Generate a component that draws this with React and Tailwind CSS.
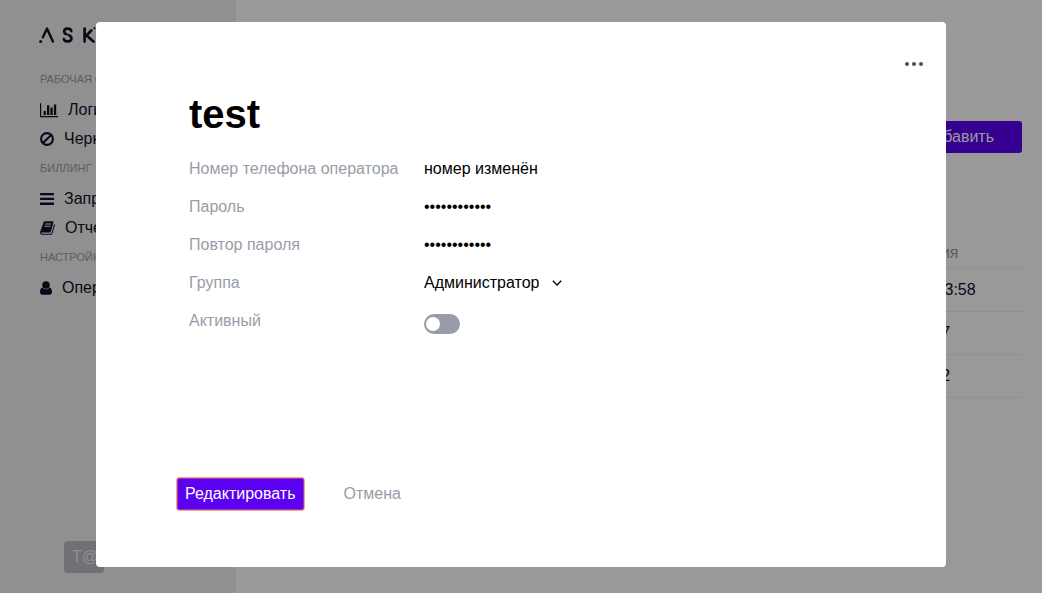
const Icon = ({ w, vb, children }) => (
  <svg width={w} height="16" viewBox={vb} fill="currentColor" aria-hidden="true" className="shrink-0">
    {children}
  </svg>
);

const icons = {
  chart: (
    <Icon w="18" vb="0 0 18 16">
      <path d="M0 1.300h1.200V14H18v1.200H0zM3.600 9h2.300v4H3.600zM7 3.300h2.300V13H7zM10.400 5.400h2.300V13h-2.300zM13.900 2.500h2.300V13h-2.300z" />
    </Icon>
  ),
  ban: (
    <Icon w="14" vb="0 0 14 16">
      <circle cx="7" cy="8" r="5.900" fill="none" stroke="currentColor" strokeWidth="2.100" />
      <path d="M2.900 12.100L11.100 3.900" stroke="currentColor" strokeWidth="2.100" />
    </Icon>
  ),
  list: (
    <Icon w="14" vb="0 0 14 16">
      <rect y="2" width="14" height="2.300" rx=".5" />
      <rect y="6.800" width="14" height="2.300" rx=".5" />
      <rect y="11.600" width="14" height="2.300" rx=".5" />
    </Icon>
  ),
  book: (
    <Icon w="15" vb="0 0 1664 1792">
      <path d="M1639 478q40 57 18 129l-275 906q-19 64-76.500 107.500t-122.500 43.500h-923q-77 0-148.500-53.500t-99.500-131.500q-24-67-2-127 0-4 3-27t4-37q1-8-3-21.500t-3-19.500q2-11 8-21t16.500-23.500 16.500-23.500q23-38 45-91.500t30-91.500q3-10 .5-30t-.5-28q3-11 17-28t17-23q21-36 42-92t25-90q1-9-2.500-32t.5-28q4-13 22-30.500t22-22.500q19-26 42.500-84.500t27.500-96.500q1-8-3-25.500t-2-26.500q2-8 9-18t18-23 17-21q8-12 16.500-30.500t15-35 16-36 19.500-32 26.500-23.500 36-11.500 47.500 5.500l-1 3q38-9 51-9h761q74 0 114 56t18 130l-274 906q-36 119-71.500 153.500t-128.500 34.500h-869q-27 0-38 15-11 16-1 43 24 70 144 70h923q29 0 56-15.500t35-41.500l300-987q7-22 5-57 38 15 59 43zm-1064 2q-4 13 2 22.500t20 9.500h608q13 0 25.500-9.500t16.500-22.500l21-64q4-13-2-22.500t-20-9.500h-608q-13 0-25.500 9.500t-16.500 22.500zm-83 256q-4 13 2 22.500t20 9.500h608q13 0 25.500-9.500t16.500-22.500l21-64q4-13-2-22.500t-20-9.500h-608q-13 0-25.500 9.500t-16.500 22.500z" />
    </Icon>
  ),
  user: (
    <Icon w="12" vb="0 0 12 16">
      <circle cx="6" cy="5" r="3.800" />
      <path d="M2.500 7.500C.8 7.900 0 9.600 0 12c0 1.600.9 2.700 2.300 2.700h7.400c1.400 0 2.300-1.100 2.300-2.700 0-2.400-.8-4.100-2.500-4.500C8.400 8.900 7.300 9.300 6 9.300s-2.400-.4-3.500-1.800z" />
    </Icon>
  ),
};

const menu = [
  { title: "Рабочая область", items: [["chart", "Логи"], ["ban", "Черный список"]] },
  { title: "Биллинг", items: [["list", "Запросы"], ["book", "Отчеты"]] },
  { title: "Настройки", items: [["user", "Операторы"]] },
];

function Logo() {
  return (
    <svg width="120" height="20" viewBox="0 0 120 20" role="img" aria-label="ASK" fill="none" stroke="currentColor" strokeWidth="2.700" strokeLinecap="round" strokeLinejoin="round" className="text-[#0e1129]">
      <path d="M3.900 12.200L8 3.600L13.900 16.600" strokeWidth="2.400" />
      <circle cx="1.600" cy="16.500" r="1.500" fill="currentColor" stroke="none" />
      <path d="M32.300 6C31.500 3 25.200 2.500 25.200 6.500C25.200 7.700 26 8.500 27 9M30.500 10.500C31.700 11.100 32.500 12 32.500 13.200C32.300 17.500 25.500 17.300 24.900 14" />
      <circle cx="28.800" cy="9.700" r="1" fill="currentColor" stroke="none" />
      <path d="M45.600 3.600V16.600M52.300 5.500L47.500 10.500L54.500 16.600" />
      <circle cx="55.400" cy="3.300" r="1.100" fill="currentColor" stroke="none" />
    </svg>
  );
}

function Sidebar() {
  return (
    <aside className="flex w-[236px] shrink-0 flex-col bg-[#f0f0f0] pt-[25px] pb-5 pl-10">
      <div className="-ml-px mb-7"><Logo /></div>
      <nav>
        {menu.map((group) => (
          <section key={group.title} className="mb-[11px]">
            <h2 className="mb-[13px] text-[11px] leading-3 text-[#989ca8] uppercase">{group.title}</h2>
            <div className="flex flex-col gap-[5px]">
              {group.items.map(([icon, label]) => (
                <a key={label} href="#" className="flex h-6 items-center gap-[10px] text-[#0e1129]">
                  {icons[icon]}
                  {label}
                </a>
              ))}
            </div>
          </section>
        ))}
      </nav>
      <button className="mt-auto ml-6 h-8 w-10 overflow-hidden rounded bg-[#babcc4] px-2 text-left text-[#f0f0f0]">T@</button>
    </aside>
  );
}

function OperatorsTable() {
  return (
    <main className="flex grow flex-col items-end px-5 pt-[121px]">
      <button className="h-8 rounded-[3px] bg-[#5b00f0] px-7 text-white">Добавить</button>
      <table className="mt-[85px] w-full text-left">
        <thead>
          <tr className="h-[30px] border-b border-[#f0f0f0]">
            <th />
            <th className="w-[192px] font-normal text-[#989ca8]">Дата обновления</th>
          </tr>
        </thead>
        <tbody>
          {["12.11.2019 13:13:58", "5.2.2019 9:40:17", "5.2.2019 9:41:02"].map((date) => (
            <tr key={date} className="h-[43px] border-b border-[#f0f0f0]">
              <td />
              <td>{date}</td>
            </tr>
          ))}
        </tbody>
      </table>
    </main>
  );
}

const labelClass = "text-[#989ca8]";
const fieldClass = "w-full bg-transparent text-black outline-none";

function OperatorDialog() {
  return (
    <form role="dialog" aria-labelledby="operator-name" className="flex min-h-[545px] w-full max-w-[850px] flex-col rounded bg-white pt-[30px] pr-[19px] pb-[57px] pl-[81px]">
      <button type="button" aria-label="Действия" className="flex h-6 w-[26px] items-center justify-center self-end text-[#484e63]">
        <svg width="18" height="4" viewBox="0 0 18 4" fill="currentColor">
          <circle cx="2" cy="2" r="2" />
          <circle cx="9" cy="2" r="2" />
          <circle cx="16" cy="2" r="2" />
        </svg>
      </button>
      <h1 id="operator-name" className="mt-[14px] pl-3 text-[40px] leading-12 font-bold text-black">test</h1>
      <div className="mt-[19px] grid grid-cols-[235px_1fr] gap-y-[14px] pl-3 leading-6">
        <label htmlFor="phone" className={labelClass}>Номер телефона оператора</label>
        <input id="phone" defaultValue="номер изменён" className={fieldClass} />
        <label htmlFor="password" className={labelClass}>Пароль</label>
        <input id="password" type="password" defaultValue="abcdefghijkl" className={fieldClass} />
        <label htmlFor="repeat" className={labelClass}>Повтор пароля</label>
        <input id="repeat" type="password" defaultValue="abcdefghijkl" className={fieldClass} />
        <label htmlFor="group" className={labelClass}>Группа</label>
        <div className="flex items-center">
          <select id="group" className="field-sizing-content appearance-none bg-transparent text-black outline-none">
            <option>Администратор</option>
          </select>
          <svg width="10" height="6" viewBox="0 0 10 6" fill="none" stroke="black" strokeWidth="1.300" className="ml-[13px] shrink-0" aria-hidden="true">
            <path d="M.8 .8L5 5L9.200 .8" />
          </svg>
        </div>
        <label htmlFor="active" className={labelClass}>Активный</label>
        <input id="active" type="checkbox" role="switch" className="mt-[5px] flex h-5 w-9 appearance-none items-center rounded-full bg-[#989ca8] px-0.5 before:size-[14px] before:rounded-full before:bg-white checked:justify-end checked:bg-[#5b00f0]" />
      </div>
      <div className="mt-auto flex gap-8">
        <button type="button" className="h-8 rounded-[3px] bg-[#5b00f0] px-2 text-white shadow-[0_0_0_1px_#f2a596,inset_0_0_0_1px_#a8389f]">Редактировать</button>
        <button type="button" className="h-8 px-2 text-[#989ca8]">Отмена</button>
      </div>
    </form>
  );
}

export default function App() {
  return (
    <div className="relative flex min-h-screen bg-white font-['Liberation_Sans',Arial,sans-serif] text-base text-[#0e1129]">
      <Sidebar />
      <OperatorsTable />
      <div className="fixed inset-0 flex items-start justify-center overflow-auto bg-black/40 px-4 pt-[22px]">
        <OperatorDialog />
      </div>
    </div>
  );
}
